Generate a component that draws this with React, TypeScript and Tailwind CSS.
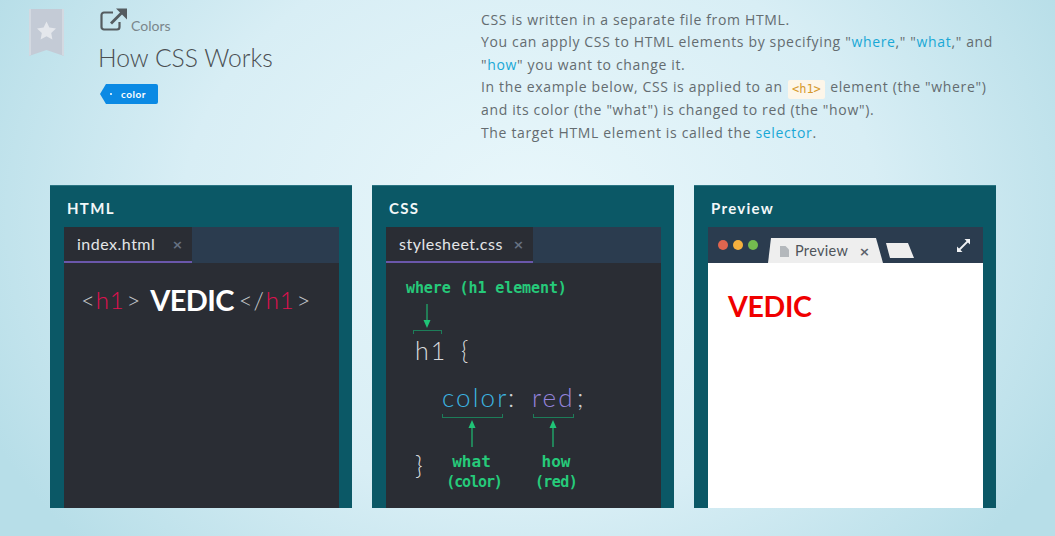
import React from "react";

const lato = "font-['Lato','Liberation_Sans',sans-serif]";
const hand = "font-['DejaVu_Sans_Mono','Liberation_Mono',monospace]";

function Panel({ title, children }: { title: string; children: React.ReactNode }) {
  return (
    <section className="w-[302px] h-[323px] bg-[#0b5866] flex flex-col pl-[14px] pr-[13px] border-t border-[#2b7583]">
      <h2 className={`${lato} h-[41px] pl-[3px] pt-[14px] text-[15px] leading-[17px] font-bold tracking-[1.3px] text-[#f2f7f8]`}>{title}</h2>
      {children}
    </section>
  );
}

function EditorTabs({ name, width }: { name: string; width: string }) {
  return (
    <div className="h-[36px] shrink-0 bg-[#2b3c4f] flex">
      <div className={`${width} h-[36px] bg-[#2a2d34] border-b-[2px] border-[#6a57ab] flex items-center justify-between pl-[13px] pr-[9px]`}>
        <span className={`${lato} text-[16px] tracking-[0.5px] text-[#e4e6e8] leading-none`}>{name}</span>
        <span className="text-[#667182] text-[13px] font-bold leading-none font-['DejaVu_Sans',sans-serif]">×</span>
      </div>
    </div>
  );
}

function Bracket({ className }: { className: string }) {
  return <div className={`absolute border-b border-l border-r border-[#1d7d59] h-[4px] ${className}`} />;
}

function UpArrow({ className, h }: { className: string; h: number }) {
  return (
    <svg className={`absolute ${className}`} width="10" height={h} viewBox={`0 0 10 ${h}`}>
      <path d={`M5 6V${h}`} stroke="#1fb36f" strokeWidth="1.3" fill="none" />
      <path d="M5 0L8.5 8H1.5Z" fill="#20c477" />
    </svg>
  );
}

export default function App() {
  return (
    <div className="w-[1055px] h-[536px] overflow-hidden bg-[radial-gradient(ellipse_600px_490px_at_530px_220px,#e9f7fb_0%,#d8eef5_58%,#b7dee8_100%)]">
      <header className="h-[185px] flex">
        <div className="w-[99px] pl-[29px] pt-[9px] shrink-0">
          <svg width="35" height="47" viewBox="0 0 35 47">
            <path d="M0 0H35V47L17.5 41L0 47Z" fill="#c4cbd6" />
            <path d="M0 0H2V46L0 47ZM33 0H35V47L33 46Z" fill="#d3d9e1" />
            <path d="M17.5 12.5l2.9 6 6.6.9-4.8 4.6 1.2 6.5-5.9-3.2-5.9 3.2 1.2-6.5-4.8-4.6 6.6-.9z" fill="#e4e7ec" />
          </svg>
        </div>
        <div className="w-[382px] shrink-0">
          <div className="h-[34px] pt-[8px] pl-[1px] flex items-start">
            <svg width="28" height="24" viewBox="0 0 28 24" fill="none" stroke="#555c60">
              <path d="M13 4.5H4A2.5 2.5 0 0 0 1.5 7V19A2.5 2.5 0 0 0 4 21.5H17A2.5 2.5 0 0 0 19.5 19V14" strokeWidth="2.2" />
              <path d="M11 15.5L22 4.5" strokeWidth="2.8" />
              <path d="M16 0.5H27V11.5Z" fill="#555c60" stroke="none" />
            </svg>
            <span className={`${lato} ml-[3px] mt-[9px] text-[14px] leading-[18px] text-[#7a868b]`}>Colors</span>
          </div>
          <h1 className={`${lato} text-[24.7px] leading-[34px] font-light text-[#4a4f52] mt-[7px] -ml-[1px]`}>How CSS Works</h1>
          <div className="mt-[9px] pl-[1px] flex">
            <div className="w-0 h-0 border-y-[10px] border-y-transparent border-r-[6px] border-r-[#0b8ae4]" />
            <div className={`${lato} w-[52px] h-[20px] bg-[#0b8ae4] rounded-r-[2px] flex items-center text-[10px] font-bold tracking-[0.5px] text-white`}>
              <span className="w-[2px] h-[2px] rounded-full bg-white ml-[4px] mr-[9px]" />
              color
            </div>
          </div>
        </div>
        <div className="pt-[9px] w-[530px] font-['Open_Sans',sans-serif] text-[14px] leading-[22.4px] tracking-[0.65px] text-[#646c70]">
          <p>CSS is written in a separate file from HTML.</p>
          <p>You can apply CSS to HTML elements by specifying "<span className="text-[#19a8d6]">where</span>," "<span className="text-[#19a8d6]">what</span>," and</p>
          <p>"<span className="text-[#19a8d6]">how</span>" you want to change it.</p>
          <p>
            In the example below, CSS is applied to an{" "}
            <code className="inline-block mx-[1px] px-[4px] h-[19px] align-[-1px] leading-[19px] bg-[#fdf6e9] rounded-[2px] text-[12px] tracking-normal text-[#d69a2d] font-['DejaVu_Sans_Mono',monospace]">&lt;h1&gt;</code>{" "}
            element (the "where")
          </p>
          <p>and its color (the "what") is changed to red (the "how").</p>
          <p>The target HTML element is called the <span className="text-[#19a8d6]">selector</span>.</p>
        </div>
      </header>

      <main className="flex gap-[20px] pl-[50px]">
        <Panel title="HTML">
          <EditorTabs name="index.html" width="w-[128px]" />
          <div className={`${lato} flex-1 bg-[#2a2d34] pl-[17px] pt-[21px] flex`}>
            <div className="self-start flex items-center h-[32px] text-[24px] leading-[32px] tracking-[0.8px] font-light text-[#c4c7ca]">
              <span>&lt;</span><span className="text-[#e0104f]">h1</span><span className="ml-[2px]">&gt;</span>
              <span className="text-white font-bold tracking-[-0.6px] text-[29px] ml-[9px]">VEDIC</span>
              <span className="ml-[5px]">&lt;/</span><span className="text-[#e0104f] ml-[1px]">h1</span><span className="ml-[2px]">&gt;</span>
            </div>
          </div>
        </Panel>

        <Panel title="CSS">
          <EditorTabs name="stylesheet.css" width="w-[147px]" />
          <div className="relative flex-1 bg-[#2a2d34]">
            <span className={`${hand} absolute left-[20px] top-[16px] text-[15px] leading-[18px] font-bold tracking-[-0.1px] text-[#26ca7a] whitespace-nowrap`}>where (h1 element)</span>
            <svg className="absolute left-[36px] top-[41px]" width="10" height="24" viewBox="0 0 10 24">
              <path d="M5 0V18" stroke="#1fb36f" strokeWidth="1.2" />
              <path d="M5 24L1.5 16H8.5Z" fill="#20c477" />
            </svg>
            <Bracket className="left-[27px] top-[67px] w-[29px] rotate-180" />
            <span className={`${lato} absolute left-[29px] top-[72px] text-[25px] leading-[30px] tracking-[2px] font-light text-[#d8dadc]`}>h1</span>
            <span className={`${lato} absolute left-[75px] top-[72px] text-[25px] leading-[30px] font-light text-[#d8dadc]`}>{"{"}</span>

            <span className={`${lato} absolute left-[56px] top-[118px] text-[26px] leading-[32px] tracking-[2.1px] font-light text-[#3cb4e0]`}>color</span>
            <span className={`${lato} absolute left-[122px] top-[118px] text-[26px] leading-[32px] font-light text-[#d0d2d5]`}>:</span>
            <span className={`${lato} absolute left-[146px] top-[118px] text-[26px] leading-[32px] tracking-[2.1px] font-light text-[#9484dc]`}>red</span>
            <span className={`${lato} absolute left-[191px] top-[118px] text-[26px] leading-[32px] font-light text-[#d0d2d5]`}>;</span>

            <Bracket className="left-[56px] top-[151px] w-[61px]" />
            <Bracket className="left-[147px] top-[151px] w-[41px]" />
            <UpArrow className="left-[81px] top-[157px]" h={27} />
            <UpArrow className="left-[162px] top-[157px]" h={27} />

            <span className={`${lato} absolute left-[29px] top-[186px] text-[26px] leading-[32px] font-light text-[#d8dadc]`}>{"}"}</span>
            <span className={`${hand} absolute left-[55px] top-[188px] w-[61px] text-center leading-[21px] font-bold text-[#26ca7a]`}>
              <span className="block text-[16px]">what</span>
              <span className="block text-[15px] tracking-[-1.1px] pl-[5px] whitespace-nowrap">(color)</span>
            </span>
            <span className={`${hand} absolute left-[147px] top-[188px] w-[46px] text-center leading-[21px] font-bold text-[#26ca7a]`}>
              <span className="block text-[16px]">how</span>
              <span className="block text-[15px] tracking-[-0.6px]">(red)</span>
            </span>
          </div>
        </Panel>

        <Panel title="Preview">
          <div className="h-[36px] shrink-0 bg-[#2b3c4f] flex items-end">
            <div className="flex gap-[5px] pl-[10px] pb-[13px]">
              <i className="w-[10px] h-[10px] rounded-full bg-[#e0654f]" />
              <i className="w-[10px] h-[10px] rounded-full bg-[#f5b03e]" />
              <i className="w-[10px] h-[10px] rounded-full bg-[#74bb4f]" />
            </div>
            <div className="ml-[10px] w-[115px] h-[25px] bg-[#eeeeee] [clip-path:polygon(3px_0,108px_0,115px_100%,0_100%)] flex items-center pl-[12px] pt-[1px]">
              <svg width="9" height="11" viewBox="0 0 9 11"><path d="M0 0H5.5L9 3.5V11H0Z" fill="#b4b8bc" /></svg>
              <span className={`${lato} ml-[6px] text-[14.5px] leading-none tracking-[0.3px] text-[#4e545a]`}>Preview</span>
              <span className="ml-[11px] text-[13px] leading-none font-bold text-[#5b636b] font-['DejaVu_Sans',sans-serif]">×</span>
            </div>
            <div className="ml-[3px] mb-[5px] w-[28px] h-[15px] bg-[#eeeeee] [clip-path:polygon(0_0,22px_0,28px_100%,4px_100%)]" />
            <svg className="ml-[42px] mb-[10px]" width="15" height="15" viewBox="0 0 15 15">
              <path d="M2 13L13 2" stroke="#f0f2f4" strokeWidth="1.8" />
              <path d="M8.5 1H14V6.5ZM1 8.5V14H6.5Z" fill="#f0f2f4" />
            </svg>
          </div>
          <div className={`${lato} flex-1 bg-white pl-[20px] pt-[26px] text-[28.5px] leading-[34px] font-bold tracking-[-0.3px] text-[#f00000]`}>VEDIC</div>
        </Panel>
      </main>
    </div>
  );
}
